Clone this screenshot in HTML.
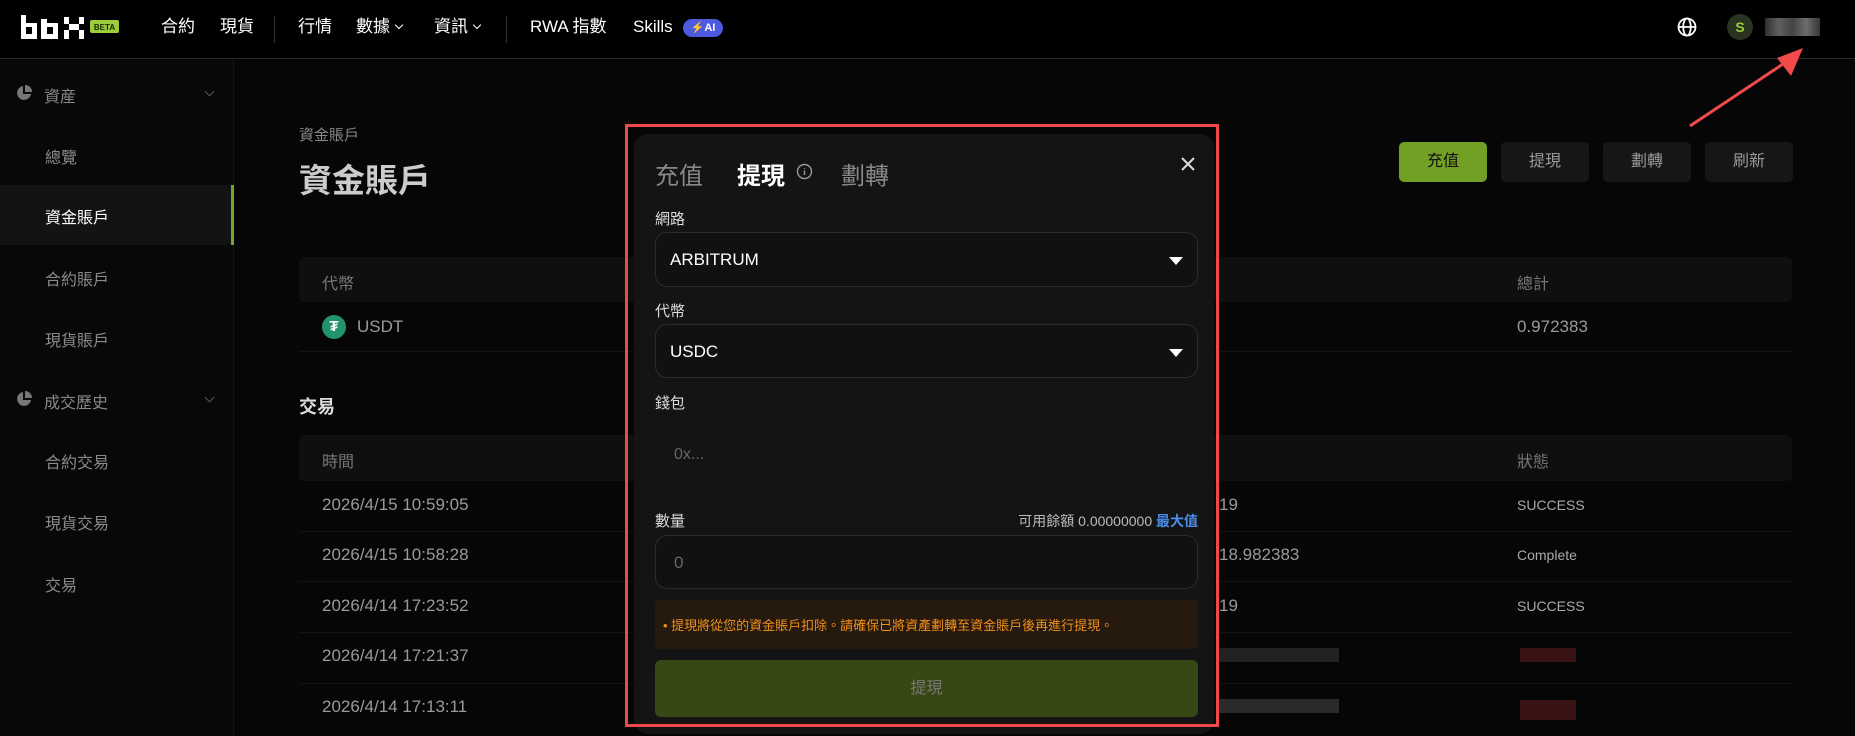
<!DOCTYPE html>
<html><head><meta charset="utf-8"><style>
*{margin:0;padding:0;box-sizing:border-box}
body{width:1855px;height:736px;background:#060606;color:#ddd;font-family:"Liberation Sans","Noto Sans CJK TC",sans-serif;overflow:hidden;position:relative}
.a{position:absolute;white-space:nowrap}
.hdr{position:absolute;left:0;top:0;width:1855px;height:59px;background:#000;border-bottom:1px solid #2a2a2a}
.nav{font-size:17px;color:#fff;top:16px;line-height:22px}
.side{position:absolute;left:0;top:60px;width:234px;height:676px;background:#080808;border-right:1px solid #151515}
.si{font-size:16px;color:#8a8a8a;left:45px}
.btn{position:absolute;top:142px;width:88px;height:40px;border-radius:5px;background:#161616;color:#999;font-size:16px;text-align:center;line-height:40px}
.th{position:absolute;left:299px;width:1493px;background:#0e0f0f;border-radius:5px}
.ct{font-size:17px;color:#9a9a9a}
.rowline{position:absolute;left:299px;width:1493px;height:1px;background:#131313}
.modal{position:absolute;left:634px;top:134px;width:580px;height:600px;background:#141414;border-radius:14px}
.lbl{font-size:15px;color:#ddd;left:21px}
.sel{position:absolute;left:21px;width:543px;border:1px solid #2c2c2c;border-radius:12px;background:#111}
.tri{position:absolute;right:14px;width:0;height:0;border-left:7px solid transparent;border-right:7px solid transparent;border-top:8px solid #fff}
.chev{position:absolute;width:7px;height:7px;border-right:1.5px solid #555;border-bottom:1.5px solid #555;transform:rotate(45deg)}
.nchev{display:inline-block;width:6px;height:6px;border-right:1.5px solid #fff;border-bottom:1.5px solid #fff;transform:rotate(45deg);margin-left:6px;vertical-align:4px}
</style></head><body>
<div class="hdr"></div>
<svg class="a" style="left:21px;top:15px" width="98" height="24" viewBox="0 0 98 24"><g fill="#fff"><path d="M0 0h5v8h11v16H0zM5 12v7h6v-7z"/><path d="M22 4h6v4h11v16H22zM28 12v7h6v-7z" transform="translate(-2 0)"/><path d="M43 2h5v7h-5zM58 2h5v7h-5zM48 9h10v6H48zM43 15h5v9h-5zM58 15h5v9h-5z"/></g><rect x="69" y="5" width="29" height="13" rx="2" fill="#9ccd3b"/><text x="83.5" y="15" font-size="8" font-weight="bold" text-anchor="middle" fill="#1b2a00" font-family="Liberation Sans">BETA</text></svg>
<div class="a nav" style="left:161px">合約</div>
<div class="a nav" style="left:220px">現貨</div>
<div class="a" style="left:274px;top:16px;width:1px;height:27px;background:#333"></div>
<div class="a nav" style="left:298px">行情</div>
<div class="a nav" style="left:356px">數據<span class="nchev"></span></div>
<div class="a nav" style="left:434px">資訊<span class="nchev"></span></div>
<div class="a" style="left:506px;top:16px;width:1px;height:27px;background:#333"></div>
<div class="a nav" style="left:530px">RWA 指數</div>
<div class="a nav" style="left:633px">Skills</div>
<div class="a" style="left:683px;top:19px;width:40px;height:18px;border-radius:9px;background:#4b5ae0;color:#fff;font-size:11px;line-height:18px;text-align:center;font-weight:bold">⚡AI</div>
<svg class="a" style="left:1677px;top:17px" width="20" height="20" viewBox="0 0 20 20" fill="none" stroke="#fff" stroke-width="1.8"><circle cx="10" cy="10" r="8.5"/><ellipse cx="10" cy="10" rx="3.8" ry="8.5"/><path d="M1.5 10h17"/></svg>
<div class="a" style="left:1727px;top:14px;width:26px;height:26px;border-radius:50%;background:#2a3220;color:#9ccd3b;font-size:14px;text-align:center;line-height:26px;font-weight:bold">S</div>
<div class="a" style="left:1765px;top:18px;width:55px;height:18px;background:linear-gradient(90deg,#3a3a3a,#777,#555,#888,#444);opacity:.8"></div>
<svg class="a" style="left:1680px;top:40px" width="140" height="100"><path d="M10 86L115 16" stroke="#f24a4a" stroke-width="3"/><path d="M123 8l-12 28-14-18z" fill="#f24a4a"/></svg>

<div class="side"></div>
<svg class="a" style="left:16px;top:85px" width="16" height="16" viewBox="0 0 16 16"><path d="M7 1a7 7 0 1 0 8 8H7z" fill="#777"/><path d="M9 0v7h7A7 7 0 0 0 9 0z" fill="#777"/></svg>
<div class="a si" style="left:44px;top:83px;color:#888">資産</div><div class="chev" style="left:206px;top:88px"></div>
<div class="a si" style="top:144px">總覽</div>
<div class="a" style="left:0;top:185px;width:233px;height:60px;background:#121412"></div>
<div class="a" style="left:231px;top:185px;width:3px;height:60px;background:#7aa32a"></div>
<div class="a si" style="top:204px;color:#fff">資金賬戶</div>
<div class="a si" style="top:266px">合約賬戶</div>
<div class="a si" style="top:327px">現貨賬戶</div>
<svg class="a" style="left:16px;top:391px" width="16" height="16" viewBox="0 0 16 16"><path d="M7 1a7 7 0 1 0 8 8H7z" fill="#777"/><path d="M9 0v7h7A7 7 0 0 0 9 0z" fill="#777"/></svg>
<div class="a si" style="left:44px;top:389px;color:#888">成交歷史</div><div class="chev" style="left:206px;top:394px"></div>
<div class="a si" style="top:449px">合約交易</div>
<div class="a si" style="top:510px">現貨交易</div>
<div class="a si" style="top:572px">交易</div>

<div class="a" style="left:299px;top:124px;font-size:15px;color:#888">資金賬戶</div>
<div class="a" style="left:299px;top:154px;font-size:33px;font-weight:bold;color:#ccc">資金賬戶</div>
<div class="btn" style="left:1399px;background:#72a024;color:#111">充值</div>
<div class="btn" style="left:1501px">提現</div>
<div class="btn" style="left:1603px">劃轉</div>
<div class="btn" style="left:1705px">刷新</div>

<div class="th" style="top:257px;height:45px"></div>
<div class="a ct" style="left:322px;top:270px;color:#777;font-size:16px">代幣</div>
<div class="a ct" style="left:1517px;top:270px;color:#777;font-size:16px">總計</div>
<div class="a" style="left:322px;top:315px;width:24px;height:24px;border-radius:50%;background:#23926f;color:#fff;font-size:15px;text-align:center;line-height:24px;font-weight:bold">₮</div>
<div class="a ct" style="left:357px;top:317px">USDT</div>
<div class="a ct" style="left:1517px;top:317px">0.972383</div>
<div class="rowline" style="top:351px"></div>
<div class="a" style="left:299px;top:393px;font-size:18px;font-weight:bold;color:#ddd">交易</div>
<div class="th" style="top:435px;height:46px"></div>
<div class="a ct" style="left:322px;top:448px;color:#777;font-size:16px">時間</div>
<div class="a ct" style="left:1517px;top:448px;color:#777;font-size:16px">狀態</div>
<div class="a ct" style="left:322px;top:495px">2026/4/15 10:59:05</div>
<div class="a ct" style="left:322px;top:545px">2026/4/15 10:58:28</div>
<div class="a ct" style="left:322px;top:596px">2026/4/14 17:23:52</div>
<div class="a ct" style="left:322px;top:646px">2026/4/14 17:21:37</div>
<div class="a ct" style="left:322px;top:697px">2026/4/14 17:13:11</div>
<div class="a ct" style="left:1219px;top:495px">19</div>
<div class="a ct" style="left:1219px;top:545px">18.982383</div>
<div class="a ct" style="left:1219px;top:596px">19</div>
<div class="a" style="left:1219px;top:648px;width:120px;height:14px;background:#222"></div>
<div class="a" style="left:1219px;top:699px;width:120px;height:14px;background:#2a2a2a"></div>
<div class="a" style="left:1517px;top:497px;font-size:14px;color:#aaa">SUCCESS</div>
<div class="a" style="left:1517px;top:547px;font-size:14px;color:#aaa">Complete</div>
<div class="a" style="left:1517px;top:598px;font-size:14px;color:#aaa">SUCCESS</div>
<div class="a" style="left:1520px;top:648px;width:56px;height:14px;background:#3a1414"></div>
<div class="a" style="left:1520px;top:700px;width:56px;height:20px;background:#3a1414"></div>
<div class="rowline" style="top:531px"></div><div class="rowline" style="top:581px"></div><div class="rowline" style="top:632px"></div><div class="rowline" style="top:683px"></div>

<div class="modal">
<div class="a" style="left:21px;top:22px;font-size:24px;color:#888">充值</div>
<div class="a" style="left:103px;top:22px;font-size:24px;color:#fff;font-weight:bold">提現</div>
<svg class="a" style="left:162px;top:29px" width="17" height="17" viewBox="0 0 17 17" fill="none" stroke="#999" stroke-width="1.4"><circle cx="8.5" cy="8.5" r="7"/><path d="M8.5 7.5v4.5M8.5 5v.8"/></svg>
<div class="a" style="left:207px;top:22px;font-size:24px;color:#888">劃轉</div>
<svg class="a" style="left:547px;top:23px" width="14" height="14" stroke="#ddd" stroke-width="2"><path d="M1 1l12 12M13 1L1 13"/></svg>
<div class="a lbl" style="top:74px">網路</div>
<div class="sel" style="top:98px;height:55px"><div class="a" style="left:14px;top:17px;font-size:17px;color:#fff">ARBITRUM</div><div class="tri" style="top:24px"></div></div>
<div class="a lbl" style="top:166px">代幣</div>
<div class="sel" style="top:190px;height:54px"><div class="a" style="left:14px;top:17px;font-size:17px;color:#fff">USDC</div><div class="tri" style="top:24px"></div></div>
<div class="a lbl" style="top:258px">錢包</div>
<div class="a" style="left:40px;top:312px;font-size:16px;color:#666">0x...</div>
<div class="a lbl" style="top:376px">數量</div>
<div class="a" style="right:16px;top:377px;font-size:14px;color:#bbb">可用餘額 0.00000000 <span style="color:#4a8eea;font-weight:bold">最大值</span></div>
<div class="sel" style="top:401px;height:54px"><div class="a" style="left:18px;top:17px;font-size:17px;color:#666">0</div></div>
<div class="a" style="left:21px;top:466px;width:543px;height:49px;background:#26190e;border-radius:4px"><div class="a" style="left:8px;top:15px;font-size:13px;color:#f0901a">• 提現將從您的資金賬戶扣除。請確保已將資產劃轉至資金賬戶後再進行提現。</div></div>
<div class="a" style="left:21px;top:526px;width:543px;height:57px;background:#374815;border-radius:6px;text-align:center;line-height:57px;color:#777;font-size:16px">提現</div>
</div>
<div class="a" style="left:625px;top:124px;width:594px;height:603px;border:3px solid #f04848"></div>
</body></html>
